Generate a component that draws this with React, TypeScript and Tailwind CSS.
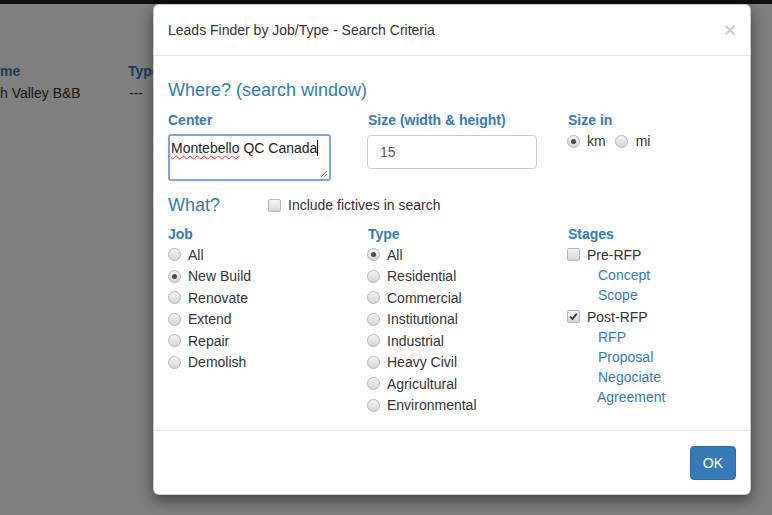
import React from 'react'

function Radio({ checked }: { checked?: boolean }) {
  return (
    <span className="w-[13px] h-[13px] shrink-0 rounded-full border border-[#b5b5b5] bg-linear-to-b from-[#f5f5f5] to-[#d6d6d6] flex items-center justify-center">
      {checked && <span className="w-[5px] h-[5px] rounded-full bg-[#4a4a4a]" />}
    </span>
  )
}

function Check({ checked }: { checked?: boolean }) {
  return (
    <span className="w-[13px] h-[13px] shrink-0 rounded-[2px] border border-[#b5b5b5] bg-linear-to-b from-[#f5f5f5] to-[#d6d6d6] flex items-center justify-center">
      {checked && (
        <svg width="9" height="9" viewBox="0 0 9 9">
          <path d="M1.2 4.6 L3.5 7 L7.8 1.6" fill="none" stroke="#333" strokeWidth="1.8" />
        </svg>
      )}
    </span>
  )
}

function RadioRow({ label, checked }: { label: string; checked?: boolean }) {
  return (
    <div className="h-[21.5px] flex items-center">
      <Radio checked={checked} />
      <span className="ml-[7px]">{label}</span>
    </div>
  )
}

const jobs = ['All', 'New Build', 'Renovate', 'Extend', 'Repair', 'Demolish']
const types = ['All', 'Residential', 'Commercial', 'Institutional', 'Industrial', 'Heavy Civil', 'Agricultural', 'Environmental']

export default function App() {
  return (
    <div className="relative w-[772px] h-[515px] overflow-hidden bg-white text-[14px] leading-[20px] text-[#333] font-['Liberation_Sans',Arial,sans-serif]">
      {/* page behind the modal, scrolled sideways */}
      <div className="h-[4px] bg-[#1c1c1c]" />
      <div className="pt-[57px]">
        <div className="flex font-bold text-[#337ab7]">
          <span className="w-[128px]">me</span>
          <span>Type</span>
        </div>
        <div className="flex mt-[2px]">
          <span className="w-[129px]">h Valley B&amp;B</span>
          <span>---</span>
        </div>
      </div>
      <div className="absolute inset-0 bg-black/50" />

      {/* modal */}
      <div className="absolute left-[153px] top-[4px] w-[598px] bg-white border border-black/20 rounded-[6px] shadow-[0_5px_15px_rgba(0,0,0,0.5)]">
        <div className="flex items-center justify-between px-[14px] py-[15px] border-b border-[#e5e5e5]">
          <span>Leads Finder by Job/Type - Search Criteria</span>
          <span className="text-[21px] leading-[20px] font-bold text-black/20">×</span>
        </div>

        <div className="px-[14px] pt-[15px] pb-[14px]">
          <div className="h-[37px] flex items-center text-[18px] text-[#337ab7]">Where? (search window)</div>

          <div className="grid grid-cols-[199px_200px_1fr] mt-[2px]">
            <div>
              <div className="font-bold text-[#337ab7]">Center</div>
              <div className="relative mt-[4px] w-[163px] h-[47px] border-2 border-[#7aa6df] rounded-[3px] pl-[1px] pt-[2px] text-[#222]">
                <span className="underline decoration-wavy decoration-red-500 decoration-1 underline-offset-2">Montebello</span> QC Canada
                <span className="inline-block w-[1px] h-[16px] bg-black align-[-3px]" />
                <svg className="absolute right-[1px] bottom-[1px]" width="8" height="8" viewBox="0 0 8 8">
                  <path d="M7 1 L1 7 M7 4 L4 7" stroke="#888" strokeWidth="1" />
                </svg>
              </div>
            </div>
            <div className="pl-[1px]">
              <div className="font-bold text-[#337ab7]">Size (width &amp; height)</div>
              <div className="-ml-[1px] mt-[5px] w-[170px] h-[34px] border border-[#ccc] rounded-[4px] px-[12px] flex items-center text-[#555]">15</div>
            </div>
            <div>
              <div className="pl-[1px] font-bold text-[#337ab7]">Size in</div>
              <div className="mt-[1px] h-[20px] flex items-center">
                <Radio checked />
                <span className="ml-[7px]">km</span>
                <span className="ml-[9px]"><Radio /></span>
                <span className="ml-[8px]">mi</span>
              </div>
            </div>
          </div>

          <div className="mt-[12px] h-[24px] flex items-center">
            <span className="w-[100px] text-[18px] text-[#337ab7]">What?</span>
            <Check />
            <span className="ml-[7px]">Include fictives in search</span>
          </div>

          <div className="grid grid-cols-[199px_200px_1fr] mt-[7px]">
            <div>
              <div className="font-bold text-[#337ab7]">Job</div>
              {jobs.map((j) => (
                <RadioRow key={j} label={j} checked={j === 'New Build'} />
              ))}
            </div>
            <div>
              <div className="pl-[1px] font-bold text-[#337ab7]">Type</div>
              {types.map((t) => (
                <RadioRow key={t} label={t} checked={t === 'All'} />
              ))}
            </div>
            <div>
              <div className="pl-[1px] font-bold text-[#337ab7]">Stages</div>
              <div className="h-[21px] flex items-center">
                <Check />
                <span className="ml-[7px]">Pre-RFP</span>
              </div>
              <div className="pl-[31px] text-[#337ab7]">Concept</div>
              <div className="pl-[31px] text-[#337ab7]">Scope</div>
              <div className="mt-[1px] h-[21px] flex items-center">
                <Check checked />
                <span className="ml-[7px]">Post-RFP</span>
              </div>
              <div className="pl-[31px] text-[#337ab7]">RFP</div>
              <div className="pl-[31px] text-[#337ab7]">Proposal</div>
              <div className="pl-[31px] text-[#337ab7]">Negociate</div>
              <div className="pl-[30px] text-[#337ab7]">Agreement</div>
            </div>
          </div>
        </div>

        <div className="flex justify-end px-[14px] pt-[15px] pb-[14px] border-t border-[#e5e5e5]">
          <button className="h-[34px] px-[12px] rounded-[4px] bg-[#337ab7] border border-[#2e6da4] text-white">OK</button>
        </div>
      </div>
    </div>
  )
}
